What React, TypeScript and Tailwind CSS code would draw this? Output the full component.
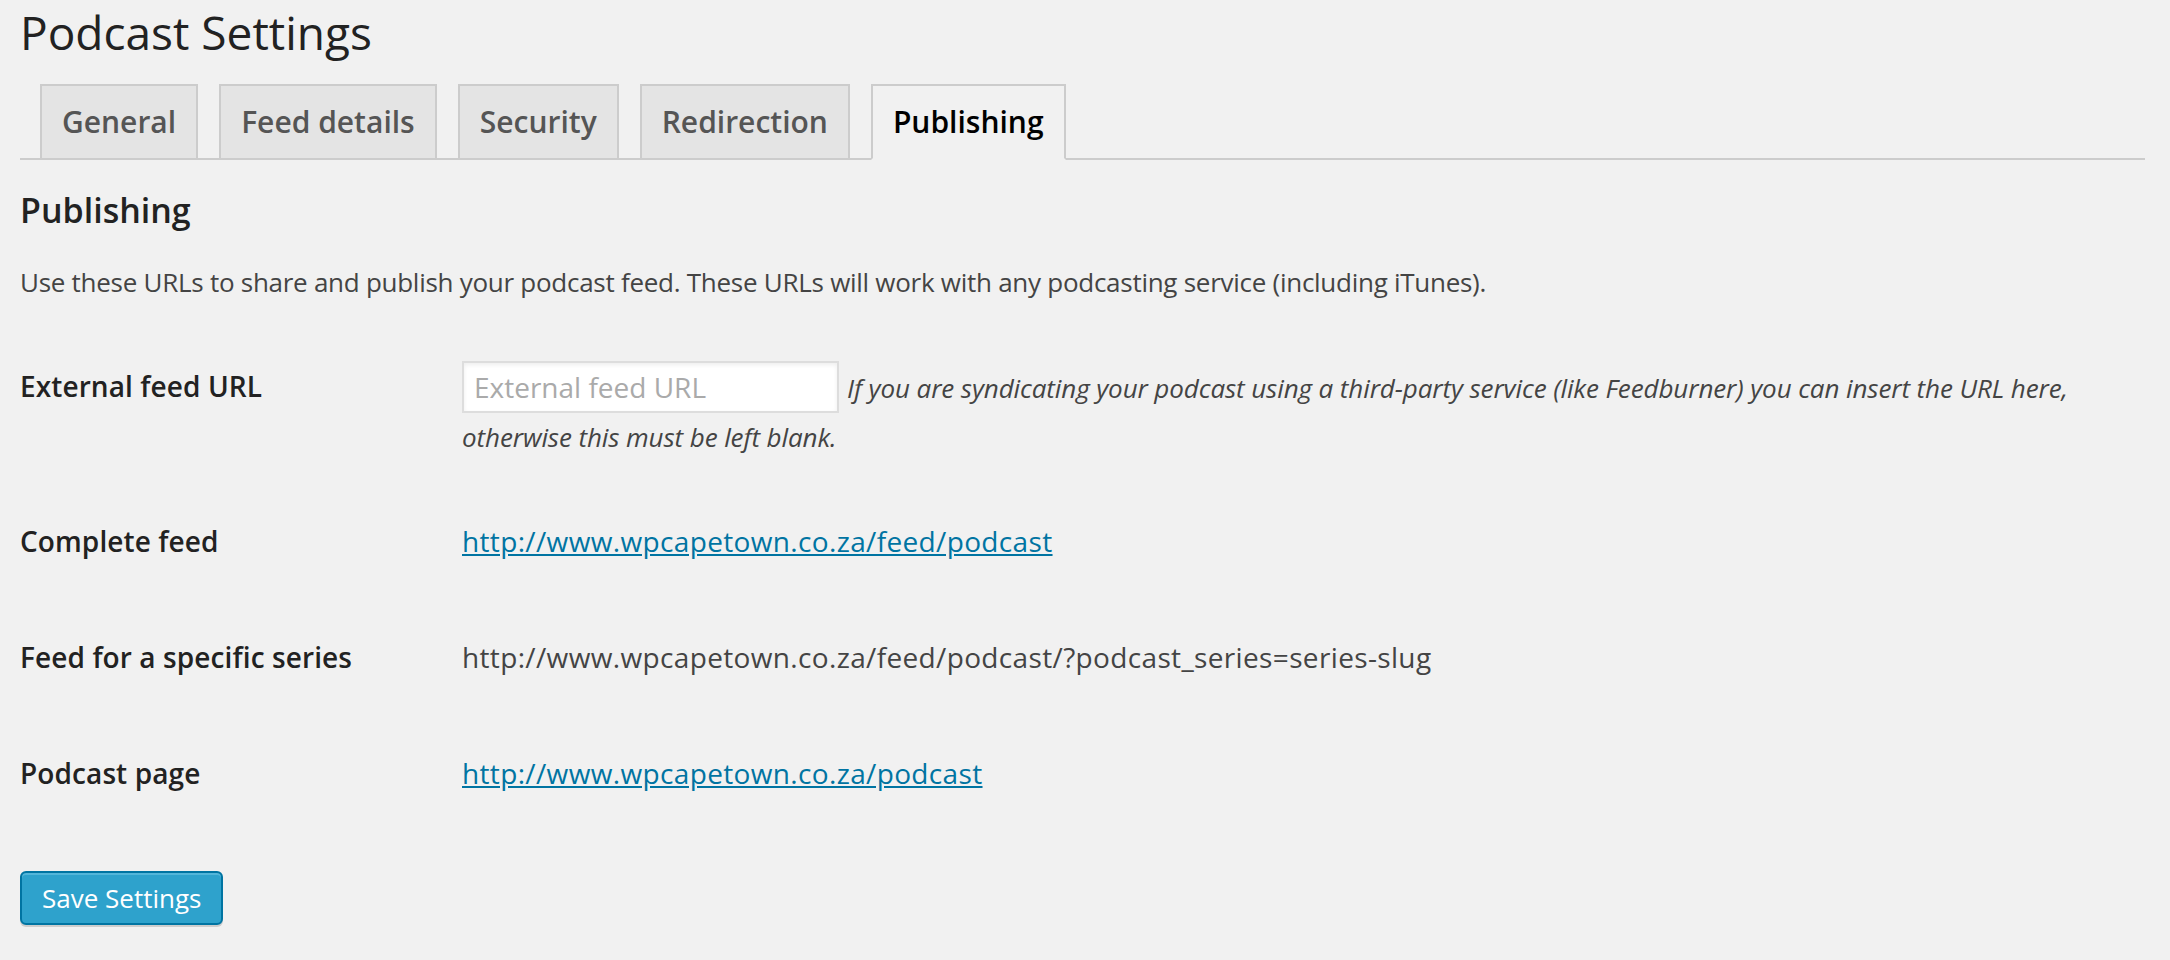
import React from 'react';

const tabs = ['General', 'Feed details', 'Security', 'Redirection', 'Publishing'];

const Row: React.FC<{ label: string; children: React.ReactNode }> = ({ label, children }) => (
  <div className="flex items-start">
    <div className="w-[442px] shrink-0 py-[40px] text-[28px] leading-[36px] font-semibold tracking-[0.1px] text-[#222]">{label}</div>
    <div className="py-[40px] text-[28px] leading-[36px] tracking-[0.35px] text-[#444]">{children}</div>
  </div>
);

export default function App() {
  const active = 'Publishing';

  return (
    <div className="min-h-screen w-full bg-[#f1f1f1] pl-[20px] pr-[25px] font-['Open_Sans',sans-serif]">
      <h2 className="pt-[3px] text-[46px] leading-[58px] font-normal text-[#222]">Podcast Settings</h2>

      <div className="mt-[23px] flex items-start gap-[21px] border-b-2 border-[#ccc] pl-[20px]">
        {tabs.map((t) =>
          t === active ? (
            <div
              key={t}
              className="-mb-[2px] h-[76px] border-2 border-[#ccc] border-b-[#f1f1f1] bg-[#f1f1f1] px-[20px] pt-[12px] text-[30px] leading-[48px] font-semibold text-black"
            >
              {t}
            </div>
          ) : (
            <div
              key={t}
              className="h-[74px] border-2 border-b-0 border-[#ccc] bg-[#e4e4e4] px-[20px] pt-[12px] text-[30px] leading-[48px] font-semibold text-[#555]"
            >
              {t}
            </div>
          )
        )}
      </div>

      <h3 className="mt-[28px] text-[34px] leading-[44px] font-semibold text-[#222]">Publishing</h3>
      <p className="mt-[32px] text-[26px] leading-[36px] tracking-[-0.27px] text-[#444]">
        Use these URLs to share and publish your podcast feed. These URLs will work with any podcasting service (including iTunes).
      </p>

      <div className="mt-[28px]">
        <div className="flex items-start">
          <div className="w-[442px] shrink-0 py-[40px] text-[28px] leading-[36px] font-semibold tracking-[0.1px] text-[#222]">External feed URL</div>
          <div className="pt-[33px] pb-[28px] text-[26px] italic tracking-[-0.1px] text-[#444]">
            <div className="flex items-baseline whitespace-nowrap">
              <input
                type="text"
                placeholder="External feed URL"
                className="h-[52px] w-[377px] border-2 border-[#ddd] bg-white px-[10px] text-[28px] not-italic tracking-normal text-[#333] shadow-[inset_0_2px_4px_rgba(0,0,0,0.07)] outline-none placeholder:text-[#aaa]"
              />
              <span className="ml-[8px] leading-[36px]">
                If you are syndicating your podcast using a third-party service (like Feedburner) you can insert the URL here,
              </span>
            </div>
            <div className="mt-[6px] leading-[36px]">otherwise this must be left blank.</div>
          </div>
        </div>

        <Row label="Complete feed">
          <a href="#" className="text-[#0074a2] underline">http://www.wpcapetown.co.za/feed/podcast</a>
        </Row>
        <Row label="Feed for a specific series">
          http://www.wpcapetown.co.za/feed/podcast/?podcast_series=series-slug
        </Row>
        <Row label="Podcast page">
          <a href="#" className="text-[#0074a2] underline">http://www.wpcapetown.co.za/podcast</a>
        </Row>
      </div>

      <button className="mt-[40px] h-[54px] rounded-[6px] border-2 border-[#0074a2] bg-[#2ea2cc] px-[20px] text-[26px] leading-[48px] text-white shadow-[inset_0_2px_0_rgba(120,200,230,0.5),0_2px_0_rgba(0,0,0,0.15)]">
        Save Settings
      </button>
    </div>
  );
}
